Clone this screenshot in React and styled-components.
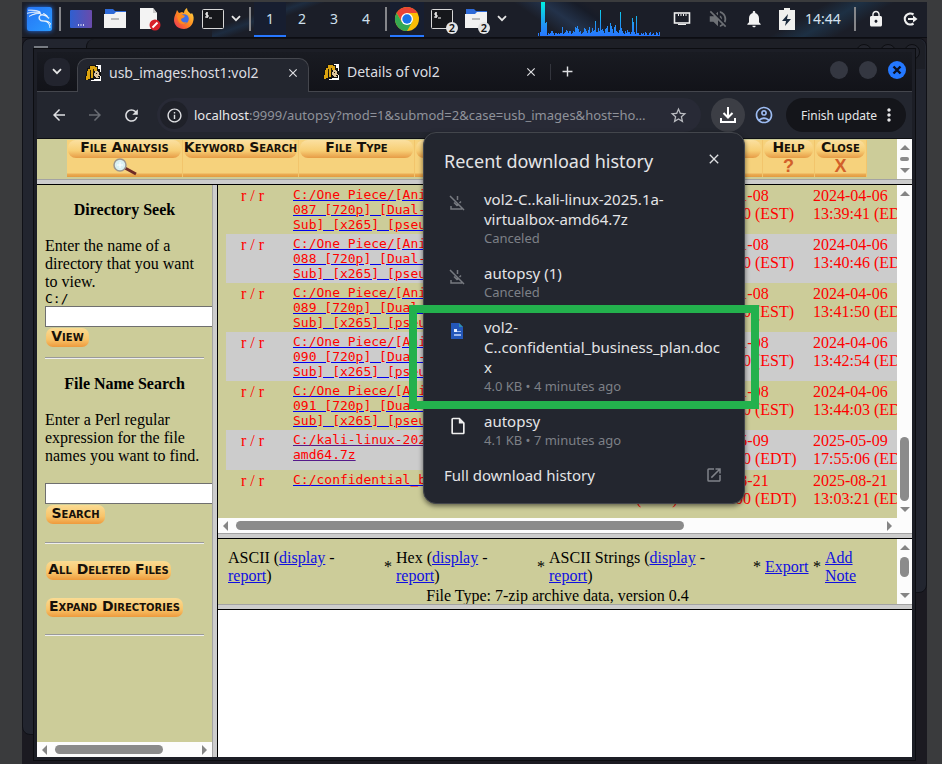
import React from "react";
import styled, { createGlobalStyle, css } from "styled-components";
import { SiKalilinux } from "react-icons/si";
import {
  MdArrowBack, MdArrowForward, MdRefresh, MdInfoOutline, MdStarBorder, MdMoreVert,
  MdOutlineAccountCircle, MdClose, MdAdd, MdLock, MdVolumeOff, MdNotifications,
  MdOutlineInsertDriveFile, MdOpenInNew,
} from "react-icons/md";

const Global = createGlobalStyle`
  * { box-sizing: border-box; }
  body { margin: 0; background: #3a3b3d; font-family: "Noto Sans", sans-serif; }
  button, input { font: inherit; color: inherit; margin: 0; padding: 0; border: 0; background: none; }
  h1, h2, p { margin: 0; }
`;

const Desktop = styled.div`
  position: relative;
  display: flex;
  flex-direction: column;
  min-height: 100vh;
  margin: 0 15px 0 22px;
  border-top: 2px solid #3a3b3d;
  background: #1b1a21;
`;

/* ---------- panel ---------- */
const Panel = styled.header`
  display: flex;
  height: 36px;
  background:
    linear-gradient(160deg, transparent 30%, #1d2c40 38%, transparent 46%) 190px 0 / 150px 36px no-repeat,
    linear-gradient(35deg, transparent 30%, #23324a 42%, #171c28 55%, transparent 60%) 470px 0 / 190px 36px no-repeat,
    linear-gradient(150deg, transparent 30%, #1d3044 45%, transparent 60%) 740px 0 / 160px 36px no-repeat,
    #1b1e28;
  border-bottom: 1px solid #0c0d12;
  color: #f2f2f2;
`;
const Slot = styled.button`
  position: relative;
  display: flex;
  align-items: center;
  justify-content: center;
  flex: none;
  width: ${(p) => p.$w || 34}px;
  font-size: 14px;
  line-height: 20px;
  color: ${(p) => p.$color || "#f2f2f2"};
  border-bottom: 2px solid ${(p) => (p.$active ? "#2777ff" : "transparent")};
  background: ${(p) => (p.$active ? "#171e30" : "none")};
`;
const Divider = styled.span`
  flex: none;
  width: 2px;
  height: 24px;
  margin: 5px 3px;
  background: #85868a;
`;
const Badge = styled.span`
  position: absolute;
  right: 2px;
  bottom: 1px;
  width: 12px;
  height: 12px;
  border-radius: 6px;
  background: #e4e4e4;
  color: #111;
  font-size: 11px;
  font-weight: 600;
  line-height: 12px;
`;
const KaliTile = styled.span`
  display: flex;
  width: 25px;
  height: 24px;
  border-radius: 2px;
  align-items: center;
  justify-content: center;
  background: linear-gradient(135deg, #2674f5, #2a9bff);
  box-shadow: 0 0 5px #2475f5;
  svg { stroke: #fff; stroke-width: 0.5; }
`;
const Spacer = styled.span`flex: 1;`;
const ClockGap = styled.span`width: 9px;`;

/* ---------- windows ---------- */
const BackWindow = styled.div`
  position: absolute;
  top: 36px;
  left: 0;
  right: 0;
  bottom: ${(p) => p.$bottom}px;
  clip-path: ${(p) => (p.$side === "left" ? "inset(0 50% 0 0)" : "inset(0 0 0 50%)")};
  border: 1px solid #101117;
  border-radius: 8px;
  background: #22252f;
`;
const BackTop = styled.div`
  position: absolute;
  top: 37px;
  left: 64px;
  right: 2px;
  height: 30px;
  border-left: 1px solid #0d0e12;
  border-radius: 8px 8px 0 0;
  background: #1d1f26;
`;
const BackDots = styled.div`
  position: absolute;
  top: 42px;
  right: 7px;
  display: flex;
  gap: 8px;
  i { width: 16px; height: 16px; border-radius: 8px; border: 1px solid #0d0e12; background: #22242c; }
`;
const BackTitle = styled.div`
  position: absolute;
  top: 44px;
  left: 12px;
  width: 14px;
  height: 3px;
  background: #777b82;
`;
const Browser = styled.main`
  position: relative;
  display: flex;
  flex-direction: column;
  flex: 1;
  margin: 10px 11px 3px 11px;
  border: 4px solid #1c1e26;
  outline: 1px solid #0c0d11;
  outline-offset: -1px;
`;
const TabStrip = styled.div`
  display: flex;
  align-items: center;
  height: 40px;
  padding: 6px 6px 0 7px;
  color: #dcdde0;
  background: linear-gradient(#191b22, #121319);
  border-bottom: 1px solid #44464d;
`;
const TabSearch = styled.button`
  display: flex;
  align-items: center;
  justify-content: center;
  flex: none;
  width: 26px;
  height: 28px;
  margin-right: 7px;
  margin-bottom: 6px;
  border-radius: 9px;
  background: #22242e;
`;
const Tab = styled.div`
  display: flex;
  align-items: center;
  flex: none;
  width: ${(p) => p.$w}px;
  height: 34px;
  padding: 0 ${(p) => (p.$active ? 8 : 3)}px 6px ${(p) => (p.$active ? 7 : 14)}px;
  gap: 8px;
  font-size: 14px;
  line-height: 20px;
  ${(p) => p.$active && css`
    margin-bottom: -1px;
    height: 35px;
    border: 1px solid #44464d;
    border-bottom: 0;
    border-radius: 10px 10px 0 0;
    background: #23262f;
  `}
`;
const TabTitle = styled.span`flex: 1; white-space: nowrap;`;
const IconButton = styled.button`
  display: flex;
  align-items: center;
  justify-content: center;
  flex: none;
  width: ${(p) => p.$size || 16}px;
  height: ${(p) => p.$size || 16}px;
  border-radius: 50%;
  color: ${(p) => p.$color || "#dedfe2"};
  background: ${(p) => p.$bg || "none"};
`;
const TabRule = styled.span`width: 1px; height: 16px; margin: 0 8px 6px 9px; background: #33353d;`;
const NewTab = styled.button`display: flex; margin-bottom: 6px; color: #dedfe2;`;
const WindowButtons = styled.div`
  display: flex;
  gap: 11px;
  margin: 0 0 10px auto;
`;
const Toolbar = styled.div`
  display: flex;
  align-items: center;
  height: 47px;
  padding: 0 6px 0 4px;
  background: #23262f;
  border-bottom: 1px solid #0e0f13;
`;
const NavButtons = styled.div`display: flex; width: 116px; button { width: 36px; }`;
const ToolbarIcons = styled.div`display: flex; align-items: center; gap: 9px; margin: 0 12px 0 10px;`;
const Omnibox = styled.div`
  display: flex;
  align-items: center;
  flex: 1;
  min-width: 0;
  height: 34px;
  padding: 0 13px 0 3px;
  border-radius: 17px;
  background: #282a36;
  font-size: 13px;
  color: #e8e8ea;
`;
const Host = styled.label`margin-left: 6px;`;
const Address = styled.input`flex: 1; min-width: 0; color: #8f929a; outline: 0;`;
const UpdateButton = styled.button`
  display: flex;
  align-items: center;
  justify-content: space-between;
  width: 120px;
  height: 34px;
  padding: 0 7px 0 15px;
  border-radius: 17px;
  background: #14151a;
  color: #e6e6e8;
  font-size: 12px;
  white-space: nowrap;
`;

/* ---------- downloads popup ---------- */
const Popup = styled.section`
  position: absolute;
  top: 80px;
  right: 167px;
  z-index: 2;
  width: 322px;
  padding: 16px 0 18px;
  border: 1px solid #43464c;
  border-radius: 13px;
  background: #23262f;
  color: #e3e4e6;
  box-shadow: 0 2px 5px #0008;
`;
const PopupHead = styled.div`
  display: flex;
  align-items: center;
  justify-content: space-between;
  height: 24px;
  padding: 0 20px;
  h1 { font-size: 18px; font-weight: 400; line-height: 24px; }
  button { margin-bottom: 4px; }
`;
const Download = styled.article`
  position: relative;
  display: grid;
  grid-template-columns: 40px 1fr;
  margin-top: 16px;
  padding: 0 24px 0 20px;
`;
const DownloadIcon = styled.span`display: flex; padding: 5px 0 0 4px; height: 24px; color: ${(p) => p.$color};`;
const FileName = styled.p`font-size: 15px; line-height: 20px; overflow-wrap: anywhere;`;
const FileMeta = styled.p`font-size: 13px; line-height: 18px; color: #7d8087;`;
const Highlight = styled.span`
  position: absolute;
  inset: -12px -15px -14px -15px;
  border: 8px solid #23b14d;
  pointer-events: none;
`;
const HistoryLink = styled.a`
  display: flex;
  align-items: center;
  justify-content: space-between;
  margin-top: 16px;
  padding: 0 21px 0 20px;
  font-size: 15px;
  line-height: 20px;
  color: inherit;
  text-decoration: none;
`;

/* ---------- framed page ---------- */
const FrameSet = styled.div`
  display: flex;
  flex-direction: column;
  flex: 1;
  min-width: 0;
  font-family: "Liberation Serif", serif;
  font-size: 16px;
  line-height: 18px;
  color: #000;
`;
const Split = styled.div`
  display: grid;
  grid-template-columns: 175px 6px minmax(0, 1fr);
  flex: 1;
`;
const Column = styled.div`display: flex; flex-direction: column; min-width: 0; background: #cc9;`;
const Gutter = styled.div`
  flex: none;
  background: #ccc;
  ${(p) => p.$vertical
    ? css`border-left: 1px solid #a3a3a3; border-right: 1px solid #000;`
    : css`height: 6px; border-top: 1px solid #a3a3a3; border-bottom: 1px solid #000;`}
`;
const Frame = styled.div`
  display: flex;
  ${(p) => p.$h && css`height: ${p.$h}px;`}
`;
const FrameBody = styled.div`flex: 1; min-width: 0; overflow: hidden; background: #cc9;`;
const ScrollTrack = styled.div`
  display: flex;
  flex: none;
  align-items: center;
  background: #fcfcfc;
  ${(p) => (p.$vertical ? css`flex-direction: column; width: 15px;` : css`height: 15px;`)}
  ${(p) => p.$corner && css`padding-right: 15px;`}
  svg { flex: none; width: 16px; height: 16px; }
`;
const Part = styled.span`
  flex: ${(p) => p.$grow} 1 0;
  ${(p) => p.$thumb && css`background: #8b8b8b; border-radius: 5px; ${p.$vertical ? "width" : "height"}: 9px;`}
`;
const Blank = styled.div`flex: 1; background: #fff;`;

const ModeBar = styled.nav`display: flex; padding: 1px 0 0 30px;`;
const Mode = styled.a`
  flex: none;
  width: ${(p) => p.$w}px;
  height: 37px;
  text-align: center;
  text-decoration: none;
  background: linear-gradient(#f6d27c 0 33px, #ebae56 34px, #e39a3e);
  border-right: 1px solid #f2c56c;
  svg { display: block; margin: 0 auto; }
`;
const goldText = css`
  font-family: "DejaVu Sans", sans-serif;
  font-weight: 700;
  font-variant: small-caps;
  color: #17110a;
  white-space: nowrap;
`;
const ModeLabel = styled.span`
  ${goldText}
  display: flex;
  justify-content: center;
  height: 18px;
  margin: 0 1px;
  font-size: 14px;
  line-height: 15px;
  border-radius: 8px;
  background: linear-gradient(#fbe0a0, #f7ce74 60%, #eba852 90%, #e59c44);
`;
const ModeMark = styled.span`
  display: block;
  font: 700 18px/17px "Liberation Sans", sans-serif;
  color: #d2602a;
`;

const Sidebar = styled.div`flex: 1; padding: 16px 8px; overflow: hidden;`;
const SideTitle = styled.h2`font-size: 16px; line-height: 18px; text-align: center;`;
const SideText = styled.p`margin-top: 18px; white-space: nowrap;`;
const SideLabel = styled.label`display: block; margin-top: 18px; white-space: nowrap;`;
const Mono = styled.label`display: block; height: 15px; font: 13px/15px "DejaVu Sans Mono", monospace;`;
const TextBox = styled.input`
  display: block;
  width: 190px;
  height: 21px;
  margin-top: ${(p) => p.$top || 0}px;
  padding: 1px 3px;
  border: 1px solid #6f6f6f;
  background: #fff;
`;
const GoldButton = styled.button`
  ${goldText}
  display: flex;
  justify-content: center;
  width: ${(p) => p.$w}px;
  height: 19px;
  margin: ${(p) => p.$top || 1}px 0 0 1px;
  font-size: 14px;
  line-height: 16px;
  border-radius: 7px;
  background: linear-gradient(#fadb92, #f8c46a 60%, #ee9a3c);
`;
const Rule = styled.hr`
  height: 2px;
  margin: ${(p) => p.$top}px 0 ${(p) => p.$bottom}px;
  border: 0;
  border-top: 1px solid #9a9a9a;
  border-bottom: 1px solid #eee;
`;

const FileTable = styled.table`
  width: 714px;
  margin: 0 0 8px 8px;
  table-layout: fixed;
  border-collapse: collapse;
  color: #f00;
  td { padding: 2px; vertical-align: top; white-space: nowrap; }
  td:first-child { padding-left: 15px; }
`;
const FileRow = styled.tr`background: ${(p) => (p.$alt ? "#ccc" : "none")};`;
const FileLink = styled.a`
  display: block;
  font: 13px/15px "DejaVu Sans Mono", monospace;
  color: #f00;
  text-decoration: underline ${(p) => (p.$visited ? "#551a8b" : "#00e")};
`;
const Actions = styled.div`
  display: flex;
  align-items: center;
  padding: 10px 0 0 10px;
  a { color: #1010e0; }
`;
const Action = styled.span`flex: none; width: ${(p) => p.$w}px; white-space: nowrap;`;
const FileType = styled.p`margin-top: 2px; text-align: center;`;

/* ---------- drawings ---------- */
const Arrow = ({ d }) => (
  <svg viewBox="0 0 16 16" fill="#858585"><path d={d} /></svg>
);
const ScrollBar = ({ vertical, corner, parts }) => (
  <ScrollTrack $vertical={vertical} $corner={corner} aria-hidden="true">
    <Arrow d={vertical ? "M3 11h10L8 6z" : "M10 3v10L5 8z"} />
    <Part $grow={parts[0]} />
    <Part $grow={parts[1]} $thumb $vertical={vertical} />
    <Part $grow={parts[2]} />
    <Arrow d={vertical ? "M3 5h10l-5 5z" : "M6 3v10l5-5z"} />
  </ScrollTrack>
);
const Folder = () => (
  <svg width="24" height="22" viewBox="0 0 24 22">
    <path d="M2 1h8l2 2h11v7H2z" fill="#2e6ad8" />
    <path d="M1 6h10l2-2h10v16H1z" fill="#f2f2f2" />
    <path d="M8 11h8" stroke="#b9b9b9" strokeWidth="2" />
  </svg>
);
const Terminal = () => (
  <svg width="22" height="20" viewBox="0 0 22 20">
    <rect x=".5" y=".5" width="21" height="19" rx="1" fill="#16171b" stroke="#d8d8d8" />
    <path d="M6 4H4v2h2v2H3M5 3v6M7 9h3" fill="none" stroke="#fff" />
  </svg>
);
const Document = () => (
  <svg width="22" height="24" viewBox="0 0 22 24">
    <path d="M1 1h13l4 5v16H1z" fill="#f3f3f3" />
    <path d="M14 1v5h4z" fill="#c9c9c9" />
    <circle cx="16" cy="18" r="5.5" fill="#d8202a" />
    <path d="M13.5 20.5l5-5" stroke="#fff" strokeWidth="2" />
  </svg>
);
const Screen = () => (
  <svg width="22" height="18" viewBox="0 0 22 18">
    <defs><linearGradient id="scr"><stop stopColor="#2f5fd0" /><stop offset="1" stopColor="#6a4bab" /></linearGradient></defs>
    <rect width="22" height="18" rx="1" fill="url(#scr)" />
    <path d="M8 15h1M10.500 15h1M13 15h1" stroke="#fff" strokeWidth="1.500" />
  </svg>
);
const Firefox = () => (
  <svg width="22" height="22" viewBox="0 0 22 22">
    <defs><linearGradient id="ff" x1="1" x2="0" y2="1"><stop stopColor="#ffe14a" /><stop offset=".5" stopColor="#ff8a1e" /><stop offset="1" stopColor="#ec2a5b" /></linearGradient></defs>
    <path d="M3 5L4 2l2 3 3-1 2 1c0-2 1-4 3-5 0 3 2 4 4 6l1-1c2 3 2 6 1 9-1 4-5 7-9 7C5 21 1 17 1 12c0-3 1-5 2-7z" fill="url(#ff)" />
    <circle cx="11" cy="11" r="4.8" fill="#3f6fe8" />
    <path d="M4 8c2-2 4-2 6-1l2 1c-1 2-3 2-4 3 0 3 3 4 6 3-2 3-8 3-9-2z" fill="#ff8a1e" />
  </svg>
);
const Chrome = () => (
  <svg width="26" height="26" viewBox="-13 -13 26 26">
    <circle r="12" fill="#fbbc05" />
    <path d="M0-6H10.4A12 12 0 0 0-10.4-6L-5 3z" fill="#ea4335" />
    <path d="M-10.4-6A12 12 0 0 0 0 12L5.2 3-5.2 3z" fill="#34a853" />
    <circle r="6" fill="#fff" />
    <circle r="4.7" fill="#1a73e8" />
  </svg>
);
const Chevron = () => (
  <svg width="10" height="7" viewBox="0 0 10 7" fill="none" stroke="#e6e6e6" strokeWidth="1.8"><path d="M1 1.2l4 4 4-4" /></svg>
);
const Ethernet = () => (
  <svg width="18" height="16" viewBox="0 0 18 16" fill="none" stroke="#eee">
    <rect x="1.5" y="2" width="15" height="10" strokeWidth="1.600" />
    <path d="M5.500 3v2M8 3v2M10.500 3v2M13 3v2M5 13.500h8" />
  </svg>
);
const Battery = () => (
  <svg width="16" height="22" viewBox="0 0 16 22">
    <path d="M5 0h6v2h5v20H0V2h5z" fill="#f0f0ee" />
    <path d="M9 6l-6 7h4l-1 5 6-7H8z" fill="#1b2a3c" />
  </svg>
);
const Logout = () => (
  <svg width="16" height="16" viewBox="0 0 16 16" fill="none" stroke="#efefef" strokeWidth="2.2">
    <path d="M11.500 3.500A5.500 5.500 0 1 0 11.500 12.500M6 8h7" />
    <path d="M11 4.500L15.500 8 11 11.500z" fill="#efefef" stroke="none" />
  </svg>
);
const BoldCross = () => (
  <svg width="10" height="10" viewBox="0 0 10 10" stroke="#0b1020" strokeWidth="2.400"><path d="M1.500 1.500l7 7M8.500 1.500l-7 7" /></svg>
);
const Hound = () => (
  <svg width="16" height="16" viewBox="0 0 16 16" shapeRendering="crispEdges">
    <path d="M9 0h7v16H6v-3h3z" fill="#fff" />
    <path d="M5 0h6v1h2v3h2v3h1v4h-1v3H9v1H0v-4h1V6h1V3h2V1h1z" fill="#111" />
    <path d="M5 1h5v1h2v4H9v2H8v5H6V9H5v5H3v1H1v-4h1V6h1V4h2z" fill="#dba310" />
    <path d="M10 6h3v1h1v3h1v2h-1v1h-4v-2H9V8h1z" fill="#dcc49c" />
    <path d="M5 5v4M8 4v4" stroke="#2a2108" />
    <path d="M11 8h1M13 11h2M10 12h1" stroke="#111" />
  </svg>
);
const DownloadGlyph = ({ off }) => off ? (
  <svg width="18" height="18" viewBox="0 0 18 18" fill="none" stroke="currentColor" strokeWidth="1.500">
    <path d="M2 2l14 14M9.500 2v4M9.500 9V12M6 8.500L9.500 12M11.500 9L13 7.500M3 12v3h11" />
  </svg>
) : (
  <svg width="18" height="18" viewBox="0 0 18 18" fill="none" stroke="currentColor" strokeWidth="2">
    <path d="M9 1v10M4.500 7L9 11.500 13.500 7M2 12v4h14v-4" />
  </svg>
);
const DocxIcon = () => (
  <svg width="18" height="18" viewBox="0 0 18 18">
    <path d="M3 1h8l4 4v12H3z" fill="#2457b8" />
    <path d="M11 1v4h4z" fill="#2f8fb0" />
    <path d="M6 7h3v3H6z" fill="#e6efff" /><path d="M9 9h4v1H9zM6 12h7v2H6z" fill="#9db8ec" />
  </svg>
);
const Magnifier = () => (
  <svg width="28" height="18" viewBox="0 0 28 18">
    <path d="M14 10l11 6" stroke="#6e2b26" strokeWidth="3" />
    <circle cx="9" cy="7" r="6" fill="#d9f0f3" stroke="#9a9690" strokeWidth="1.500" />
    <path d="M9 4v6M6 7h6" stroke="#fff" />
  </svg>
);
const levels = [3,0,4,34,34,34,34,13,14,1,3,2,3,5,5,3,1,3,3,2,3,2,3,3,9,2,3,4,6,5,3,5,5,2,3,5,4,9,8,10,7,4,5,2,3,4,8,7,5,3,6,9,3,4,8,5,6,15,4,4,8,5,26,6,7,5,3,7,8,10,4,4,13,10,7,3,9,11,5,4,3,6,24,8,5,3,2,5,3,6,4,4,2,4,18,14,4,2,20,3,3,1,1,3,2,3,1,4,3,1,1,3,4,1,2,3,1,1,4,3,1,4];
const LoadGraph = () => (
  <svg width="128" height="34" viewBox="0 0 128 34" shapeRendering="crispEdges" role="img" aria-label="Processor load">
    <defs>
      <linearGradient id="load" gradientUnits="userSpaceOnUse" x1="0" y1="0" x2="0" y2="34">
        <stop stopColor="#00f0e0" /><stop offset=".7" stopColor="#2390f5" /><stop offset="1" stopColor="#2777ff" />
      </linearGradient>
    </defs>
    {levels.map((h, i) => <rect key={i} x={i + 1} y={34 - h} width="1" height={h} fill="url(#load)" />)}
  </svg>
);

const episodes = [["087", "13:39:41"], ["088", "13:40:46"], ["089", "13:41:50"], ["090", "13:42:54"], ["091", "13:44:03"]].map(
  ([n, time]) => ({
    name: ["C:/One Piece/[Anime", `${n} [720p] [Dual-`, "Sub] [x265] [pseudo"],
    early: "2024-01-08", zone: "(EST)", late: "2024-04-06", time,
  })
);
const files = [
  ...episodes,
  { name: ["C:/kali-linux-2025", "amd64.7z"], early: "2025-05-09", zone: "(EDT)", late: "2025-05-09", time: "17:55:06", visited: true },
  { name: ["C:/confidential_bus"], early: "2025-08-21", zone: "(EDT)", late: "2025-08-21", time: "13:03:21" },
];
const downloads = [
  { name: "vol2-C..kali-linux-2025.1a-virtualbox-amd64.7z", meta: "Canceled", icon: <DownloadGlyph off />, color: "#777a80" },
  { name: "autopsy (1)", meta: "Canceled", icon: <DownloadGlyph off />, color: "#777a80" },
  { name: "vol2-C..confidential_business_plan.docx", meta: "4.0 KB • 4 minutes ago", icon: <DocxIcon />, marked: true },
  { name: "autopsy", meta: "4.1 KB • 7 minutes ago", icon: <MdOutlineInsertDriveFile size={20} />, color: "#eeeeee" },
];

const Taskbar = () => (
  <Panel>
    <Slot aria-label="Applications"><KaliTile><SiKalilinux size={24} /></KaliTile></Slot>
    <Divider />
    <Slot aria-label="Show desktop"><Screen /></Slot>
    <Slot aria-label="Files"><Folder /></Slot>
    <Slot $w={36} aria-label="Editor"><Document /></Slot>
    <Slot $w={32} aria-label="Firefox"><Firefox /></Slot>
    <Slot $w={26} aria-label="Terminal"><Terminal /></Slot>
    <Slot $w={20} aria-label="More launchers"><Chevron /></Slot>
    <Divider />
    {[1, 2, 3, 4].map((n) => <Slot key={n} $w={32} $active={n === 1} $color="#cfe0ee">{n}</Slot>)}
    <Divider />
    <Slot $active aria-label="Chrome window"><Chrome /></Slot>
    <Slot $w={36} aria-label="Terminal windows"><Terminal /><Badge>2</Badge></Slot>
    <Slot $w={32} aria-label="File windows"><Folder /><Badge>2</Badge></Slot>
    <Slot $w={20} aria-label="More windows"><Chevron /></Slot>
    <Spacer />
    <LoadGraph />
    <Slot aria-label="Network"><Ethernet /></Slot>
    <Slot $w={38} $color="#6d7075" aria-label="Volume"><MdVolumeOff size={22} /></Slot>
    <Slot $w={33} aria-label="Notifications"><MdNotifications size={20} /></Slot>
    <Slot aria-label="Power"><Battery /></Slot>
    <Slot $w={38} $color="#d5e2ee">14:44</Slot>
    <ClockGap />
    <Divider />
    <Slot aria-label="Lock"><MdLock size={18} /></Slot>
    <Slot aria-label="Log out"><Logout /></Slot>
  </Panel>
);

const Downloads = () => (
  <Popup aria-label="Downloads">
    <PopupHead>
      <h1>Recent download history</h1>
      <IconButton $size={20} aria-label="Close downloads"><MdClose size={16} /></IconButton>
    </PopupHead>
    {downloads.map((d) => (
      <Download key={d.name}>
        <DownloadIcon $color={d.color}>{d.icon}</DownloadIcon>
        <div><FileName>{d.name}</FileName><FileMeta>{d.meta}</FileMeta></div>
        {d.marked && <Highlight />}
      </Download>
    ))}
    <HistoryLink href="#history">Full download history<MdOpenInNew size={18} color="#80838a" /></HistoryLink>
  </Popup>
);

const ViewLinks = ({ label, w }) => (
  <Action $w={w}>{label} (<a href="#display">display</a> -<br /><a href="#report">report</a>)</Action>
);

export default function App() {
  return (
    <>
      <Global />
      <Desktop>
        <BackWindow $side="left" $bottom={29} />
        <BackWindow $side="right" $bottom={171} />
        <BackTop /><BackDots><i /><i /><i /></BackDots><BackTitle />
        <Taskbar />
        <Browser>
          <TabStrip>
            <TabSearch aria-label="Search tabs"><Chevron /></TabSearch>
            <Tab $active $w={232}>
              <Hound /><TabTitle>usb_images:host1:vol2</TabTitle>
              <IconButton $size={14} aria-label="Close tab"><MdClose size={14} /></IconButton>
            </Tab>
            <Tab $w={232}>
              <Hound /><TabTitle>Details of vol2</TabTitle>
              <IconButton $size={14} aria-label="Close tab"><MdClose size={14} /></IconButton>
            </Tab>
            <TabRule />
            <NewTab aria-label="New tab"><MdAdd size={17} /></NewTab>
            <WindowButtons>
              <IconButton $size={18} $bg="#343741" aria-label="Minimize" />
              <IconButton $size={18} $bg="#343741" aria-label="Maximize" />
              <IconButton $size={18} $bg="#2478ff" aria-label="Close window"><BoldCross /></IconButton>
            </WindowButtons>
          </TabStrip>
          <Toolbar>
            <NavButtons>
              <IconButton aria-label="Back"><MdArrowBack size={18} /></IconButton>
              <IconButton $color="#696c73" aria-label="Forward"><MdArrowForward size={18} /></IconButton>
              <IconButton aria-label="Reload"><MdRefresh size={19} /></IconButton>
            </NavButtons>
            <Omnibox>
              <IconButton $size={28} $bg="#1f2129" aria-label="Site information"><MdInfoOutline size={17} /></IconButton>
              <Host htmlFor="address">localhost</Host>
              <Address id="address" defaultValue=":9999/autopsy?mod=1&submod=2&case=usb_images&host=ho…" />
              <IconButton $size={20} $color="#b9bbc0" aria-label="Bookmark"><MdStarBorder size={19} /></IconButton>
            </Omnibox>
            <ToolbarIcons>
              <IconButton $size={34} $bg="#3c3e45" $color="#fff" aria-label="Downloads"><DownloadGlyph /></IconButton>
              <IconButton $size={20} $color="#9dbcf2" aria-label="Profile"><MdOutlineAccountCircle size={20} /></IconButton>
            </ToolbarIcons>
            <UpdateButton>Finish update<MdMoreVert size={20} /></UpdateButton>
          </Toolbar>
          <FrameSet>
            <Frame $h={40}>
              <FrameBody>
                <ModeBar>
                  <Mode href="#file" $w={116}><ModeLabel>File Analysis</ModeLabel><Magnifier /></Mode>
                  <Mode href="#keyword" $w={116}><ModeLabel>Keyword Search</ModeLabel></Mode>
                  <Mode href="#type" $w={116}><ModeLabel>File Type</ModeLabel></Mode>
                  <Mode href="#image" $w={116}><ModeLabel /></Mode>
                  <Mode href="#meta" $w={116}><ModeLabel /></Mode>
                  <Mode href="#unit" $w={116}><ModeLabel /></Mode>
                  <Mode href="#help" $w={52}><ModeLabel>Help</ModeLabel><ModeMark>?</ModeMark></Mode>
                  <Mode href="#close" $w={52}><ModeLabel>Close</ModeLabel><ModeMark>X</ModeMark></Mode>
                </ModeBar>
              </FrameBody>
              <ScrollBar vertical parts={[2, 4, 2]} />
            </Frame>
            <Gutter />
            <Split>
              <Column>
                <Sidebar>
                  <SideTitle>Directory Seek</SideTitle>
                  <SideText>Enter the name of a<br />directory that you want<br />to view.</SideText>
                  <Mono htmlFor="dir">C:/</Mono>
                  <TextBox id="dir" />
                  <GoldButton $w={43}>View</GoldButton>
                  <Rule $top={10} $bottom={16} />
                  <SideTitle>File Name Search</SideTitle>
                  <SideLabel htmlFor="pattern">Enter a Perl regular<br />expression for the file<br />names you want to find.</SideLabel>
                  <TextBox id="pattern" $top={18} />
                  <GoldButton $w={59}>Search</GoldButton>
                  <Rule $top={18} $bottom={17} />
                  <GoldButton $w={125}>All Deleted Files</GoldButton>
                  <GoldButton $w={137} $top={18}>Expand Directories</GoldButton>
                  <Rule $top={17} $bottom={0} />
                </Sidebar>
                <ScrollBar parts={[2, 108, 33]} />
              </Column>
              <Gutter $vertical />
              <Column>
                <Frame>
                  <FrameBody>
                    <FileTable>
                      <colgroup>
                        <col width="65" /><col width="282" /><col width="119" /><col width="119" /><col width="129" />
                      </colgroup>
                      <tbody>
                        {files.map((f, i) => (
                          <FileRow key={i} $alt={i % 2 === 1}>
                            <td>r / r</td>
                            <td>
                              {f.name.map((line) => <FileLink key={line} href="#file" $visited={f.visited}>{line}</FileLink>)}
                            </td>
                            <td>{f.early}<br />00:00:00 {f.zone}</td>
                            <td>{f.early}<br />00:00:00 {f.zone}</td>
                            <td>{f.late}<br />{f.time} (EDT)</td>
                          </FileRow>
                        ))}
                      </tbody>
                    </FileTable>
                  </FrameBody>
                  <ScrollBar vertical parts={[235, 64, 1]} />
                </Frame>
                <ScrollBar corner parts={[2, 448, 197]} />
                <Gutter />
                <Frame $h={65}>
                  <FrameBody>
                    <Actions>
                      <ViewLinks label="ASCII" w={156} />
                      <Action $w={12}>*</Action>
                      <ViewLinks label="Hex" w={141} />
                      <Action $w={12}>*</Action>
                      <ViewLinks label="ASCII Strings" w={204} />
                      <Action $w={60}>* <a href="#export">Export</a></Action>
                      <Action $w={12}>*</Action>
                      <Action $w={40}><a href="#note">Add<br />Note</a></Action>
                    </Actions>
                    <FileType>File Type: 7-zip archive data, version 0.4</FileType>
                  </FrameBody>
                  <ScrollBar vertical parts={[2, 20, 11]} />
                </Frame>
                <Gutter />
                <Blank />
              </Column>
            </Split>
          </FrameSet>
          <Downloads />
        </Browser>
      </Desktop>
    </>
  );
}
